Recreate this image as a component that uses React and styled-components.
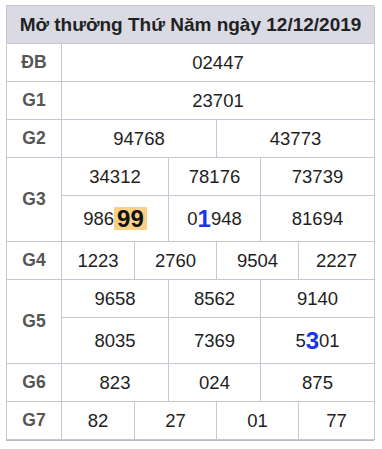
import React from 'react'
import styled, { createGlobalStyle } from 'styled-components'

const GlobalStyle = createGlobalStyle`
  body {
    margin: 0;
    background: #fff;
    font-family: "Liberation Sans", Arial, sans-serif;
  }
`

const Wrap = styled.div`
  padding: 5px 8px 0 6px;
`

const Board = styled.div`
  display: grid;
  grid-template-columns: 55px 73px 34px 48px 44px 38px 76px;
  grid-template-rows: repeat(5, 38px) 46px 38px 38px 46px 38px 38px;
  width: 368px;
  border-top: 1px solid #c6c7d2;
  border-left: 1px solid #c6c7d2;
  border-bottom: 1px solid #b8b9c4;
  box-shadow: 0 1px 0 #c6c7d2;
  box-sizing: border-box;
`

const Cell = styled.div`
  grid-column: ${p => p.col || 'auto'};
  grid-row: ${p => p.row || 'auto'};
  display: flex;
  align-items: center;
  justify-content: center;
  border-right: 1px solid #c6c7d2;
  border-bottom: 1px solid #c6c7d2;
  font-size: 18.5px;
  color: #1e1e1e;
  white-space: nowrap;
`

const Title = styled(Cell)`
  background: #d9dae4;
  font-weight: bold;
  font-size: 19px;
  color: #222;
`

const Label = styled(Cell)`
  font-weight: bold;
  color: #555;
  font-size: 17.5px;
`

// special digits: bigger and bold, either blue or on an orange marker
const Big = styled.b`
  font-size: 24px;
  color: ${p => p.$blue ? '#1a35f0' : '#111'};
  background: ${p => p.$hl ? '#fcd183' : 'transparent'};
  padding: ${p => p.$hl ? '0 3px' : '0'};
  line-height: 23px;
`

const threeCols = ['2 / 4', '4 / 6', '6 / 8']
const fourCols = ['2 / 3', '3 / 5', '5 / 7', '7 / 8']

const Prize = ({ cols, values, row }) =>
  values.map((v, i) => (
    <Cell key={i} col={cols[i]} row={row}>{v}</Cell>
  ))

export default function App() {
  return (
    <>
      <GlobalStyle />
      <Wrap>
        <Board>
          <Title col="1 / 8">Mở thưởng Thứ Năm ngày 12/12/2019</Title>

          <Label>ĐB</Label>
          <Cell col="2 / 8">02447</Cell>

          <Label>G1</Label>
          <Cell col="2 / 8">23701</Cell>

          <Label>G2</Label>
          <Prize cols={['2 / 5', '5 / 8']} values={['94768', '43773']} />

          <Label row="5 / 7">G3</Label>
          <Prize cols={threeCols} row="5" values={['34312', '78176', '73739']} />
          <Prize
            cols={threeCols}
            row="6"
            values={[
              <>986<Big $hl>99</Big></>,
              <>0<Big $blue>1</Big>948</>,
              '81694',
            ]}
          />

          <Label>G4</Label>
          <Prize cols={fourCols} values={['1223', '2760', '9504', '2227']} />

          <Label row="8 / 10">G5</Label>
          <Prize cols={threeCols} row="8" values={['9658', '8562', '9140']} />
          <Prize
            cols={threeCols}
            row="9"
            values={['8035', '7369', <>5<Big $blue>3</Big>01</>]}
          />

          <Label>G6</Label>
          <Prize cols={threeCols} values={['823', '024', '875']} />

          <Label>G7</Label>
          <Prize cols={fourCols} values={['82', '27', '01', '77']} />
        </Board>
      </Wrap>
    </>
  )
}
